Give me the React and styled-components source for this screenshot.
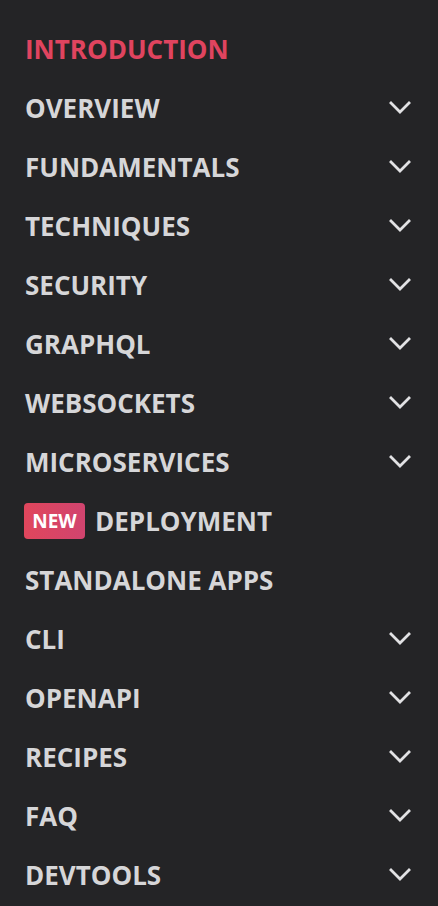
import React from 'react';
import styled, { createGlobalStyle } from 'styled-components';

const GlobalStyle = createGlobalStyle`
  html, body {
    margin: 0;
    padding: 0;
    background: #242426;
  }
  body {
    font-family: "Open Sans", Lato, sans-serif;
  }
`;

const items = [
  { label: 'INTRODUCTION', active: true },
  { label: 'OVERVIEW', expandable: true },
  { label: 'FUNDAMENTALS', expandable: true },
  { label: 'TECHNIQUES', expandable: true },
  { label: 'SECURITY', expandable: true },
  { label: 'GRAPHQL', expandable: true },
  { label: 'WEBSOCKETS', expandable: true },
  { label: 'MICROSERVICES', expandable: true },
  { label: 'DEPLOYMENT', isNew: true },
  { label: 'STANDALONE APPS' },
  { label: 'CLI', expandable: true },
  { label: 'OPENAPI', expandable: true },
  { label: 'RECIPES', expandable: true },
  { label: 'FAQ', expandable: true },
  { label: 'DEVTOOLS', expandable: true },
];

const Chevron = () => (
  <svg width="24" height="14" viewBox="0 0 24 14" fill="none">
    <path d="M3 2 L12 11 L21 2" stroke="#e2e2e4" strokeWidth="2.8" strokeLinecap="square" />
  </svg>
);

const App = () => {
  return (
    <>
      <GlobalStyle />
      <Nav>
        {items.map((item) => (
          <Row key={item.label}>
            <Label active={item.active}>
              {item.isNew && <Badge>NEW</Badge>}
              {item.label}
            </Label>
            {item.expandable && <Chevron />}
          </Row>
        ))}
      </Nav>
    </>
  );
};

const Nav = styled.nav`
  display: flex;
  flex-direction: column;
  padding: 19px 25px 0 25px;
  width: 438px;
  height: 906px;
  box-sizing: border-box;
  background: #242426;
`;

const Row = styled.div`
  display: flex;
  align-items: center;
  justify-content: space-between;
  height: 59px;
  padding-right: 1px;
`;

const Label = styled.span`
  display: flex;
  align-items: center;
  gap: 10px;
  font-size: 26px;
  font-weight: 700;
  letter-spacing: 0;
  color: ${(p) => (p.active ? '#e0445f' : '#d6d6d8')};
`;

const Badge = styled.span`
  display: inline-flex;
  align-items: center;
  justify-content: center;
  width: 61px;
  height: 36px;
  margin-left: -1px;
  border-radius: 4px;
  background: linear-gradient(90deg, #e0465c, #d1446f);
  color: #fff;
  font-size: 19px;
  font-weight: 700;
`;

export default App;
